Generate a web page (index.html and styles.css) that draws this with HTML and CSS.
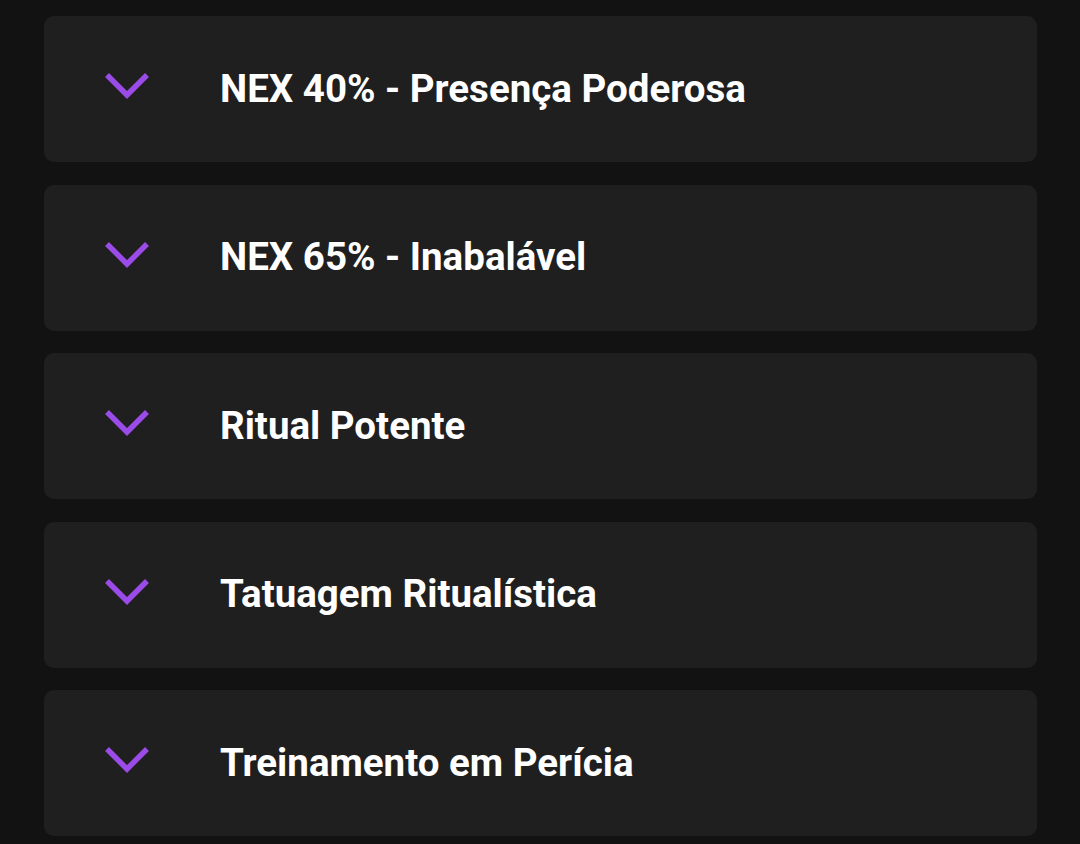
FILE: index.html
```html
<!DOCTYPE html>
<html>

<head>
    <title>Poderes</title>
    <meta name="viewport" content="width=device-width, initial-scale=1.0">
    <link rel="stylesheet" href="styles.css">
</head>

<body>
    <div class="list">
        <div class="item">
            <svg class="chevron" viewBox="0 0 44 28"><path d="M2 2 L22 22 L42 2" /></svg>
            <span class="title">NEX 40% - Presença Poderosa</span>
        </div>
        <div class="item">
            <svg class="chevron" viewBox="0 0 44 28"><path d="M2 2 L22 22 L42 2" /></svg>
            <span class="title">NEX 65% - Inabalável</span>
        </div>
        <div class="item">
            <svg class="chevron" viewBox="0 0 44 28"><path d="M2 2 L22 22 L42 2" /></svg>
            <span class="title">Ritual Potente</span>
        </div>
        <div class="item">
            <svg class="chevron" viewBox="0 0 44 28"><path d="M2 2 L22 22 L42 2" /></svg>
            <span class="title">Tatuagem Ritualística</span>
        </div>
        <div class="item">
            <svg class="chevron" viewBox="0 0 44 28"><path d="M2 2 L22 22 L42 2" /></svg>
            <span class="title">Treinamento em Perícia</span>
        </div>
    </div>
</body>

</html>
```

FILE: styles.css
```css
body {
    margin: 0;
    padding: 0;
    background-color: #121212;
    font-family: Roboto, "Liberation Sans", sans-serif;
    height: 844px;
    overflow: hidden;
}

.list {
    display: flex;
    flex-direction: column;
    gap: 22.5px;
    padding: 16px 43px 0 44px;
}

.item {
    background-color: #1f1f1f;
    border-radius: 10px;
    height: 146px;
    display: flex;
    align-items: center;
    padding-left: 61px;
    box-sizing: border-box;
}

.chevron {
    width: 44px;
    height: 28px;
    margin-top: -4px;
    flex-shrink: 0;
}

.chevron path {
    fill: none;
    stroke: #9b4ce8;
    stroke-width: 5.5;
    stroke-linecap: butt;
    stroke-linejoin: miter;
}

.title {
    margin-left: 71px;
    color: #ffffff;
    font-size: 38.5px;
    font-weight: 700;
    margin-top: -2px;
}
```
